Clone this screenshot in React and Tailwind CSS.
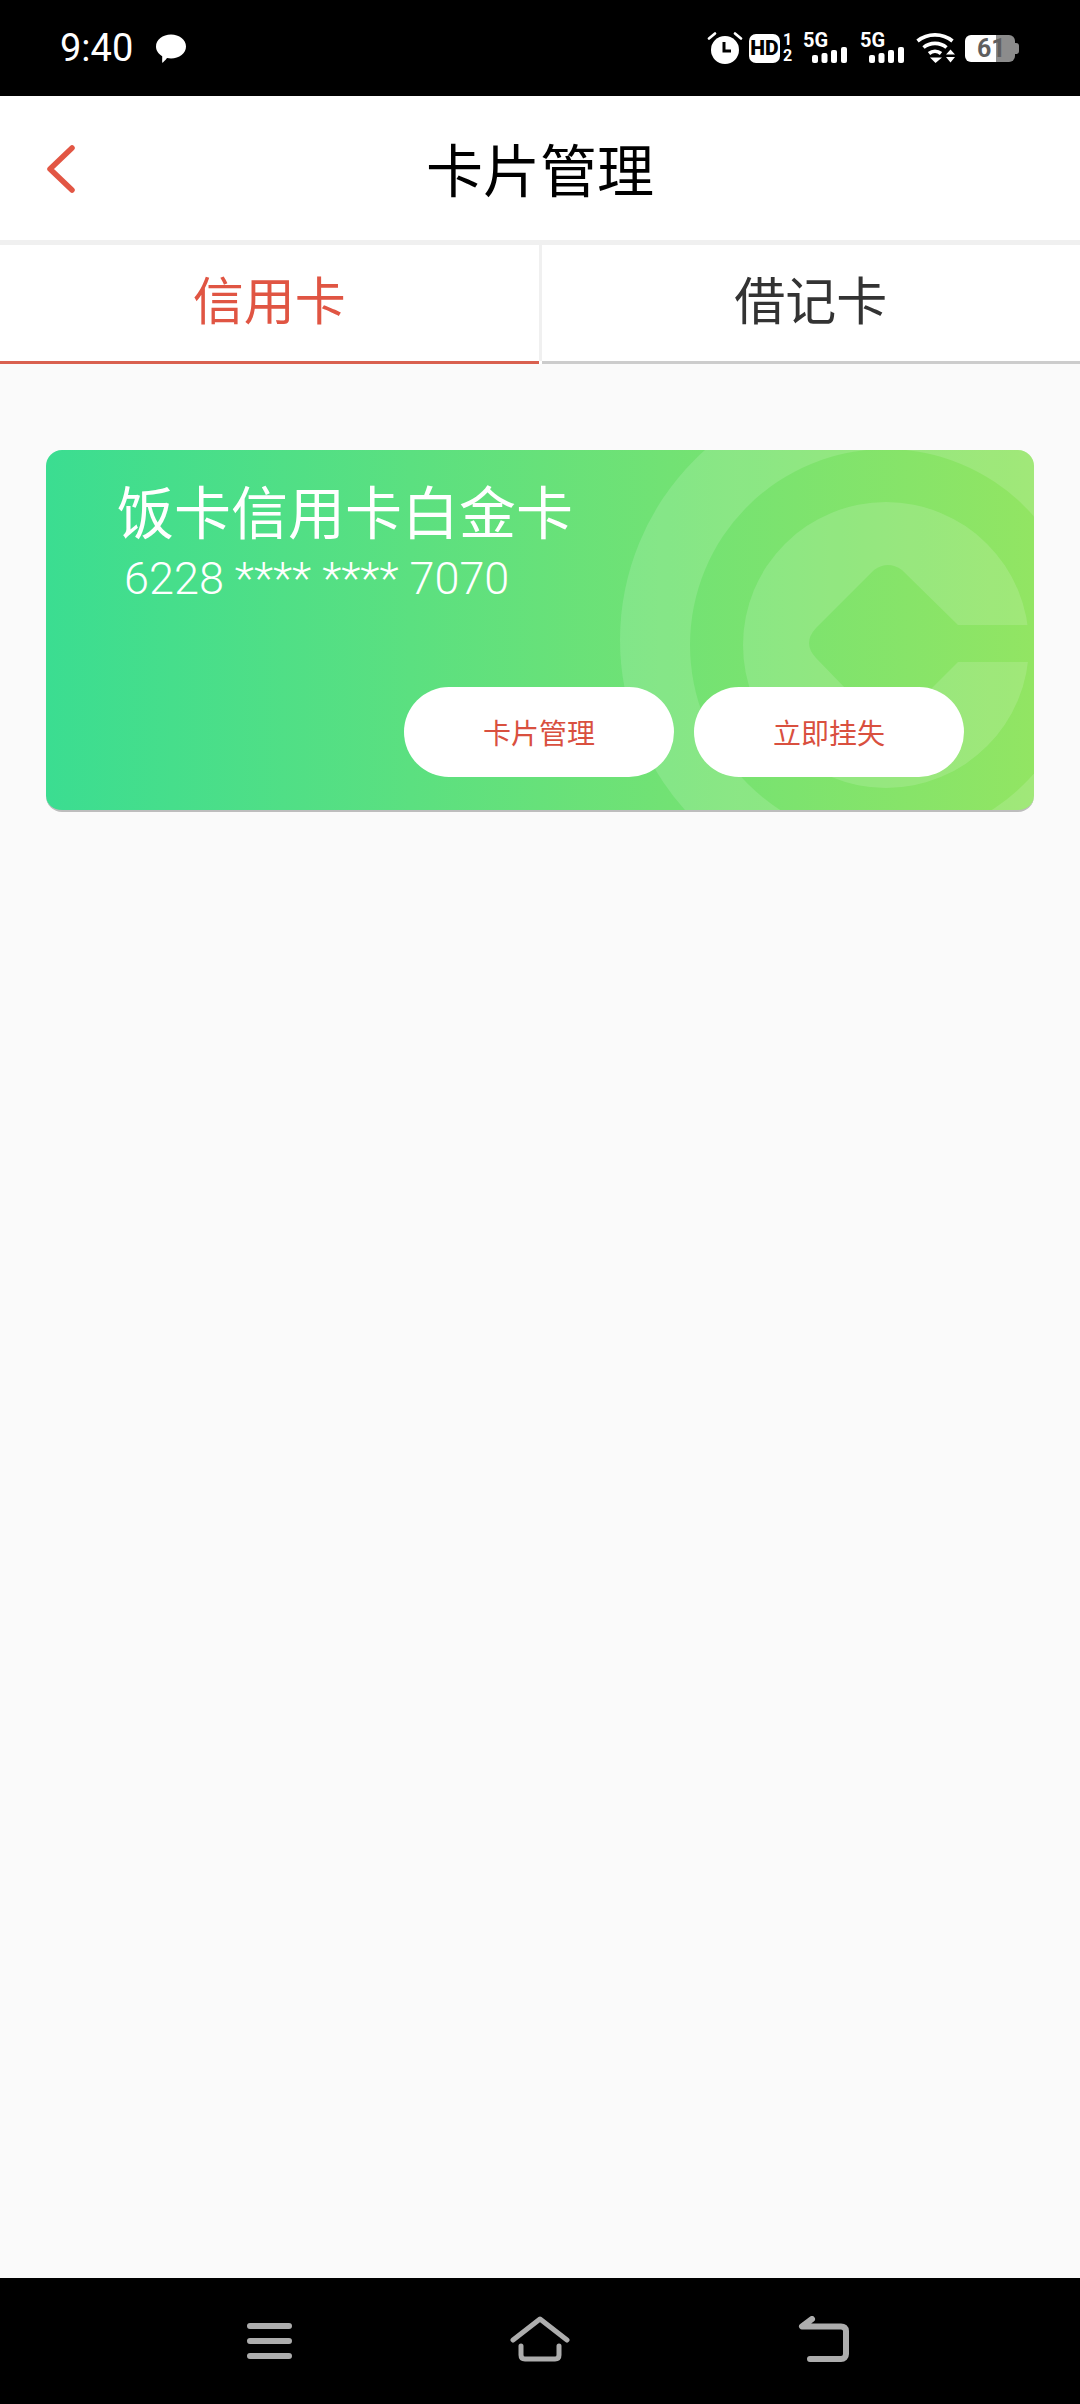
import React from 'react';

const cjk = { fontFamily: '"Noto Sans CJK SC", "Noto Sans", sans-serif' };

const Signal = () => (
  <div className="relative w-[44px] h-[30px]">
    <span className="absolute left-0 top-[-3px] text-[20px] leading-[20px] font-bold text-white font-['Roboto',sans-serif]">5G</span>
    <svg className="absolute left-0 top-0" width="44" height="30" viewBox="0 0 44 30" fill="#fff">
      <rect x="9" y="22" width="6" height="8" rx="2" />
      <rect x="18.5" y="20" width="6" height="10" rx="2" />
      <rect x="28" y="17" width="6" height="13" rx="2" />
      <rect x="38" y="14" width="6" height="16" rx="2" />
    </svg>
  </div>
);

const StatusBar = () => (
  <div className="h-24 bg-black flex items-start shrink-0 text-white">
    <span className="ml-[60px] mt-[25px] text-[38px] leading-[46px] font-['Roboto',sans-serif]">9:40</span>
    <svg className="ml-[22px] mt-[33px]" width="32" height="32" viewBox="0 0 32 32" fill="#fff">
      <path d="M16 1.500C24.300 1.500 31 6.900 31 13.500C31 20.100 24.300 25.500 16 25.500C14.600 25.500 13.300 25.300 12 25C10.400 27.200 8 29.500 7.500 29.800C7 30 7.300 26 7.200 23.200C3.500 21 1 17.500 1 13.500C1 6.900 7.700 1.500 16 1.500Z" />
    </svg>

    <div className="ml-auto mr-[60px] mt-[32px] flex items-start">
      {/* alarm */}
      <svg width="36" height="32" viewBox="0 0 36 32" fill="#fff">
        <circle cx="18" cy="18" r="14" />
        <path d="M2 6.500L8 1.500M34 6.500L28 1.500" stroke="#fff" strokeWidth="2.600" strokeLinecap="round" fill="none" />
        <path d="M17 10V19H24" stroke="#000" strokeWidth="3" fill="none" />
      </svg>

      <div className="ml-[6px] mt-[2px] w-[31px] h-[29px] rounded-[7px] bg-white flex items-center justify-center text-black text-[21px] leading-none font-black font-['Roboto',sans-serif]">HD</div>
      <div className="ml-[3px] w-[9px] flex flex-col text-[16px] leading-[16px] font-bold font-['Roboto',sans-serif]">
        <span>1</span>
        <span>2</span>
      </div>

      <div className="ml-[11px] mt-[1px]"><Signal /></div>
      <div className="ml-[13px] mt-[1px]"><Signal /></div>

      {/* wifi */}
      <svg className="ml-[12px]" width="40" height="31" viewBox="0 0 40 31" fill="none">
        <path d="M1.500 9C11.500 0.800 26.500 0.800 36.500 9" stroke="#fff" strokeWidth="3.600" />
        <path d="M7.500 15.500C14 10 24 10 30.500 15.500" stroke="#fff" strokeWidth="3.600" />
        <path d="M13 21.500C16.500 18.600 21.500 18.600 25 21.500" stroke="#fff" strokeWidth="3.600" />
        <path d="M14 25.500H26L19.500 31Z" fill="#fff" />
        <path d="M30 22.500H39L34.500 17.500Z M30 25H39L34.500 30.500Z" fill="#fff" />
      </svg>

      {/* battery */}
      <div className="ml-[9px] mt-[3px] relative flex w-[55px] h-[27px]">
        <div className="w-[31px] h-full bg-white rounded-l-[6px]" />
        <div className="w-[19px] h-full bg-[#8c8c8c] rounded-r-[6px]" />
        <div className="w-[4px] h-[11px] mt-[8px] bg-[#8c8c8c] rounded-r-[3px]" />
        <span className="absolute left-[12px] top-0 text-[25px] leading-[27px] font-bold text-[#5f5f5f] font-['Roboto',sans-serif]">61</span>
      </div>
    </div>
  </div>
);

const Tab = ({ label, active }) => (
  <div className={`flex-1 h-full flex items-center justify-center pb-[10px] border-b-[3px] text-[51px] ${active ? 'border-[#d9604f] text-[#e05543]' : 'border-[#cccccc] text-[#333333]'}`}>
    {label}
  </div>
);

const CardButton = ({ label }) => (
  <button className="w-[270px] h-[90px] rounded-full bg-white text-[#d9503f] text-[28px] flex items-center justify-center">
    {label}
  </button>
);

const BankCard = () => (
  <div className="relative overflow-hidden h-[362px] mx-[46px] mt-[86px] rounded-[16px] bg-[linear-gradient(to_right,#3bdd91,#92e563)] border-b-2 border-[#bdbdbd]">
    {/* logo watermark */}
    <svg className="absolute inset-0" width="988" height="362" viewBox="0 0 988 362" fill="none">
      <defs>
        <linearGradient id="base" gradientUnits="userSpaceOnUse" x1="0" y1="0" x2="988" y2="0">
          <stop offset="0" stopColor="#3bdd91" />
          <stop offset="1" stopColor="#92e563" />
        </linearGradient>
      </defs>
      <circle cx="829" cy="190" r="255" fill="#fff" fillOpacity="0.14" />
      <circle cx="840" cy="195" r="196" fill="url(#base)" />
      <circle cx="840" cy="195" r="143" fill="#fff" fillOpacity="0.14" />
      <path d="M770 178L828 120Q842 110 856 120L912 175H988V212H912L856 268Q842 278 828 268L770 208Q756 193 770 178Z" fill="url(#base)" />
    </svg>

    <div className="relative h-full flex flex-col text-white">
      <div className="ml-[71px] mt-[26px] text-[57px] leading-[66px]">饭卡信用卡白金卡</div>
      <div className="ml-[78px] mt-[12px] text-[45px] leading-[50px] font-['Roboto',sans-serif] font-light">6228 **** **** 7070</div>
      <div className="flex justify-end gap-[20px] mr-[70px] mt-auto mb-[33px]">
        <CardButton label="卡片管理" />
        <CardButton label="立即挂失" />
      </div>
    </div>
  </div>
);

const NavBar = () => (
  <div className="h-[126px] bg-black shrink-0 flex items-start pl-[246px] pt-[38px]">
    <svg width="47" height="44" viewBox="0 0 47 44" fill="none" stroke="#adadad" strokeWidth="6" strokeLinecap="round">
      <path d="M4 10H43M4 25H43M4 40H43" />
    </svg>
    <svg className="ml-[217px]" width="60" height="46" viewBox="0 0 60 46" fill="none" stroke="#adadad" strokeWidth="5" strokeLinecap="round" strokeLinejoin="round">
      <path d="M3 24L30 3L57 24" />
      <path d="M11 30V39C11 42 12.500 43 15 43H45C47.500 43 49 42 49 39V30" />
    </svg>
    <svg className="ml-[228px]" width="52" height="46" viewBox="0 0 52 46" fill="none" stroke="#adadad" strokeWidth="6" strokeLinecap="round" strokeLinejoin="round">
      <path d="M14 3L4 10.500H43C46 10.500 48 12 48 15V38C48 41 46 43 43 43H12" />
    </svg>
  </div>
);

export default function App() {
  return (
    <div className="h-[2404px] flex flex-col bg-[#fafafa] overflow-hidden" style={cjk}>
      <StatusBar />

      <header className="h-[144px] bg-white flex items-center relative shrink-0">
        <svg className="absolute left-[45px] top-[49px]" width="32" height="48" viewBox="0 0 32 48" fill="none" stroke="#e25644" strokeWidth="5.500" strokeLinecap="round" strokeLinejoin="round">
          <path d="M27 3L5 24L27 45" />
        </svg>
        <h1 className="w-full text-center text-[57px] leading-[66px] pb-[2px] text-black">卡片管理</h1>
      </header>

      <div className="h-[5px] bg-[#f0f0f0] shrink-0" />

      <div className="h-[119px] bg-white flex shrink-0">
        <Tab label="信用卡" active />
        <div className="w-[3px] h-[116px] bg-[#f0f0f0]" />
        <Tab label="借记卡" />
      </div>

      <main className="flex-1">
        <BankCard />
      </main>

      <NavBar />
    </div>
  );
}
